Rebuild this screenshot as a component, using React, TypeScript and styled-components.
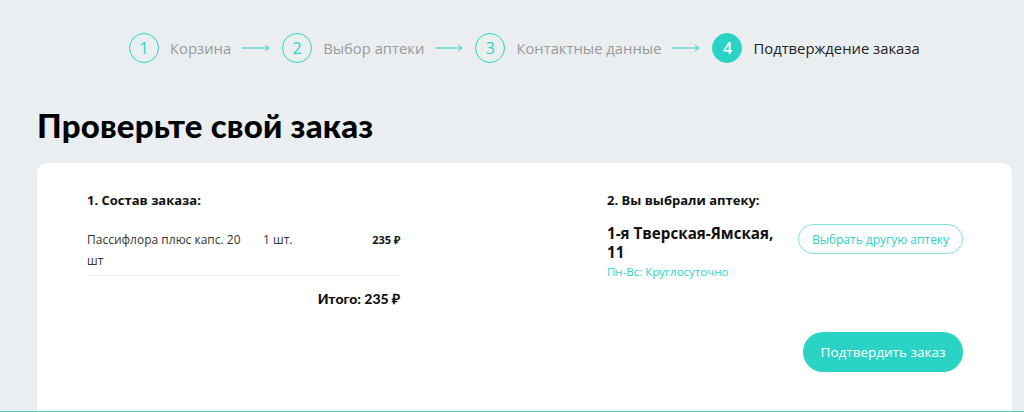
import styled, { createGlobalStyle } from "styled-components";

const TEAL = "#2bd3c6";

const GlobalStyle = createGlobalStyle`
  html, body {
    margin: 0;
    padding: 0;
    background: #ebeef1;
  }
  body {
    font-family: "Open Sans", "Liberation Sans", sans-serif;
    color: #111;
  }
`;

const Page = styled.div`
  width: 1024px;
  height: 412px;
  box-sizing: border-box;
  overflow: hidden;
  border-bottom: 1px solid #5fcfc4;
  display: flex;
  flex-direction: column;
`;

const Steps = styled.ol`
  list-style: none;
  margin: 0;
  padding: 33px 0 0 129px;
  display: flex;
  align-items: center;
  height: 30px;
`;

const Step = styled.li`
  display: flex;
  align-items: center;
`;

const StepCircle = styled.span<{ $active?: boolean }>`
  width: 28px;
  height: 28px;
  border-radius: 50%;
  border: 1px solid ${TEAL};
  background: ${(p) => (p.$active ? TEAL : "transparent")};
  color: ${(p) => (p.$active ? "#fff" : TEAL)};
  font-weight: ${(p) => (p.$active ? 600 : 400)};
  font-size: 16px;
  display: flex;
  align-items: center;
  justify-content: center;
`;

const StepLabel = styled.span<{ $active?: boolean }>`
  margin-left: 11px;
  font-size: 14.8px;
  color: ${(p) => (p.$active ? "#222" : "#9a9a9a")};
`;

const Arrow = styled.svg`
  margin: 0 12px 0 11px;
  flex: none;
`;

const Title = styled.h1`
  margin: 42px 0 0 37px;
  font-family: "Lato", "Liberation Sans", sans-serif;
  font-weight: 900;
  font-size: 33px;
  letter-spacing: 0.2px;
  line-height: 40px;
  color: #000;
`;

const Card = styled.section`
  margin: 18px 12px 0 37px;
  flex: 1;
  background: #fff;
  border-radius: 10px 10px 0 0;
  padding: 28px 49px 0 50px;
  display: flex;
  justify-content: space-between;
`;

const LeftCol = styled.div`
  width: 313px;
`;

const RightCol = styled.div`
  width: 356px;
  display: flex;
  flex-direction: column;
`;

const SectionTitle = styled.h2`
  margin: 0;
  font-size: 13px;
  font-weight: 700;
  line-height: 18px;
`;

const ItemRow = styled.div`
  margin-top: 20px;
  display: grid;
  grid-template-columns: 176px 1fr auto;
  font-size: 12px;
  line-height: 21px;
  color: #333;
  padding-bottom: 4px;
  border-bottom: 1px solid #eceef0;
`;

const ItemName = styled.span`
  padding-right: 14px;
`;

const Price = styled.span`
  font-weight: 700;
  color: #111;
  font-size: 11px;
`;

const Total = styled.div`
  margin-top: 14px;
  text-align: right;
  font-family: "Lato", "Liberation Sans", sans-serif;
  font-weight: 900;
  font-size: 14px;
  line-height: 17px;
`;

const PharmacyRow = styled.div`
  margin-top: 15px;
  display: flex;
  justify-content: space-between;
  align-items: flex-start;
`;

const Address = styled.div`
  width: 180px;
  font-size: 15.2px;
  font-weight: 700;
  line-height: 19px;
`;

const Hours = styled.div`
  margin-top: 2px;
  font-size: 11.5px;
  font-weight: 400;
  color: ${TEAL};
  line-height: 16px;
`;

const OutlineButton = styled.button`
  width: 165px;
  height: 30px;
  border-radius: 15px;
  border: 1px solid #7fe3da;
  background: #fff;
  color: ${TEAL};
  font-family: "Open Sans", "Liberation Sans", sans-serif;
  font-size: 12px;
`;

const PrimaryButton = styled.button`
  align-self: flex-end;
  margin-top: 52px;
  width: 160px;
  height: 40px;
  border-radius: 20px;
  border: none;
  background: ${TEAL};
  color: #fff;
  font-family: "Open Sans", "Liberation Sans", sans-serif;
  font-size: 13.5px;
`;

const steps = ["Корзина", "Выбор аптеки", "Контактные данные", "Подтверждение заказа"];

const StepArrow = () => (
  <Arrow width="28" height="8" viewBox="0 0 28 8">
    <path d="M0 4H27M23 1L27 4L23 7" fill="none" stroke={TEAL} strokeWidth="1" />
  </Arrow>
);

export default function App() {
  return (
    <Page>
      <GlobalStyle />
      <Steps>
        {steps.map((s, i) => {
          const active = i === steps.length - 1;
          return (
            <Step key={s}>
              <StepCircle $active={active}>{i + 1}</StepCircle>
              <StepLabel $active={active}>{s}</StepLabel>
              {!active && <StepArrow />}
            </Step>
          );
        })}
      </Steps>
      <Title>Проверьте свой заказ</Title>
      <Card>
        <LeftCol>
          <SectionTitle>1. Состав заказа:</SectionTitle>
          <ItemRow>
            <ItemName>Пассифлора плюс капс. 20 шт</ItemName>
            <span>1 шт.</span>
            <Price>235 ₽</Price>
          </ItemRow>
          <Total>Итого: 235 ₽</Total>
        </LeftCol>
        <RightCol>
          <SectionTitle>2. Вы выбрали аптеку:</SectionTitle>
          <PharmacyRow>
            <Address>
              1-я Тверская-Ямская, 11
              <Hours>Пн-Вс: Круглосуточно</Hours>
            </Address>
            <OutlineButton>Выбрать другую аптеку</OutlineButton>
          </PharmacyRow>
          <PrimaryButton>Подтвердить заказ</PrimaryButton>
        </RightCol>
      </Card>
    </Page>
  );
}
